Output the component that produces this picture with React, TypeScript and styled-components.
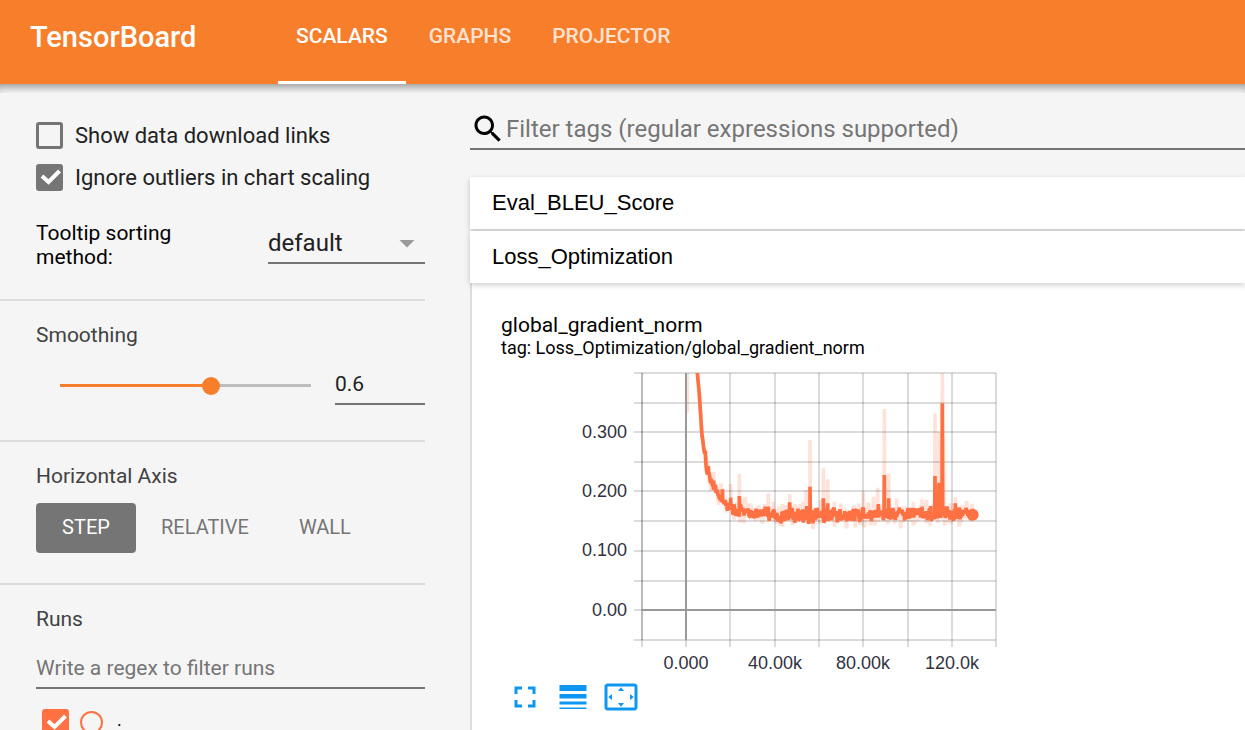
import React, { useState } from "react";
import styled, { createGlobalStyle } from "styled-components";

const GlobalStyle = createGlobalStyle`
  *, *::before, *::after { box-sizing: border-box; }
  body { margin: 0; background: #f5f5f5; color: #000; font-family: Roboto, "Liberation Sans", sans-serif; }
  button, input, select { font-family: inherit; }
`;

const Page = styled.div`
  display: flex;
  flex-direction: column;
  height: 100vh;
  overflow: hidden;
`;

const Header = styled.header`
  display: flex;
  flex: none;
  height: 84px;
  padding-left: 30px;
  background: #f77e2b;
  color: #fff;
`;

const Brand = styled.h1`
  width: 248px;
  margin: 0;
  font-size: 29px;
  line-height: 74px;
  font-weight: 500;
`;

const Tabs = styled.nav`
  display: flex;
  gap: 5px;
`;

const Tab = styled.button<{ $active?: boolean }>`
  padding: 0 18px 9px;
  border: 0;
  border-bottom: 3px solid ${(p) => (p.$active ? "#fff" : "transparent")};
  background: none;
  color: ${(p) => (p.$active ? "#fff" : "rgba(255, 255, 255, 0.8)")};
  font-size: 21px;
  font-weight: 500;
`;

const Body = styled.div`
  position: relative;
  display: flex;
  flex: 1;
  min-height: 0;
  overflow: hidden;

  &::before {
    content: "";
    position: absolute;
    inset: 0 0 auto;
    height: 9px;
    box-shadow: inset 0 8px 9px -5px rgba(0, 0, 0, 0.4);
  }
`;

const Sidebar = styled.aside`
  flex: none;
  width: 425px;
  margin-right: 45px;
`;

const Section = styled.section`
  padding: 22px 0 0 36px;
  border-bottom: 2px solid #dcdcdc;

  &:last-child { border-bottom: 0; }
`;

const OptionsSection = styled(Section)`
  padding-top: 38px;
  padding-bottom: 30px;
`;

const SmoothingSection = styled(Section)`
  padding-bottom: 35px;
`;

const AxisSection = styled(Section)`
  padding-bottom: 30px;
`;

const SectionTitle = styled.h2`
  margin: 0;
  color: #424242;
  font-size: 21px;
  line-height: 24px;
  font-weight: 400;
`;

const CheckLabel = styled.label`
  display: flex;
  align-items: center;
  gap: 12px;
  height: 27px;
  margin-bottom: 15px;
  color: #212121;
  font-size: 22px;
`;

const CheckFrame = styled.span`
  position: relative;
  flex: none;
  width: 27px;
  height: 27px;

  svg {
    position: absolute;
    inset: 0;
    pointer-events: none;
  }
`;

const CheckInput = styled.input<{ $color: string }>`
  appearance: none;
  display: block;
  width: 27px;
  height: 27px;
  margin: 0;
  border: 3px solid ${(p) => p.$color};
  border-radius: 3px;

  &:checked { background: ${(p) => p.$color}; }
`;

const SortRow = styled.div`
  display: flex;
  justify-content: space-between;
  padding-top: 15px;
`;

const SortLabel = styled.label`
  width: 170px;
  font-size: 21px;
  line-height: 24px;
`;

const SelectFrame = styled.span`
  position: relative;
  width: 157px;
  height: 43px;

  svg {
    position: absolute;
    top: 4px;
    right: 0;
    pointer-events: none;
  }
`;

const Select = styled.select`
  appearance: none;
  width: 100%;
  height: 43px;
  padding: 2px 0 0;
  border: 0;
  border-bottom: 2px solid #757575;
  background: none;
  color: #212121;
  font-size: 24px;
`;

const SliderRow = styled.div`
  display: flex;
  align-items: flex-end;
  gap: 15px;
  padding: 16px 0 0 15px;
`;

const Slider = styled.input<{ $ratio: number }>`
  appearance: none;
  flex: 1;
  min-width: 0;
  height: 18px;
  margin: 0 0 10px;
  background:
    linear-gradient(#f77e2b, #f77e2b) 9px 7px / calc((100% - 18px) * ${(p) => p.$ratio}) 3px no-repeat,
    linear-gradient(#bdbdbd, #bdbdbd) 9px 7px / calc(100% - 18px) 3px no-repeat;

  &::-webkit-slider-thumb {
    appearance: none;
    width: 18px;
    height: 18px;
    border: 0;
    border-radius: 50%;
    background: #f77e2b;
  }
`;

const ValueInput = styled.input`
  width: 90px;
  height: 42px;
  padding: 2px 0 0;
  border: 0;
  border-bottom: 2px solid #757575;
  background: none;
  color: #212121;
  font-size: 21px;
`;

const AxisButtons = styled.div`
  display: flex;
  margin-top: 15px;
`;

const AxisButton = styled.button<{ $active?: boolean }>`
  min-width: 100px;
  height: 50px;
  padding: 0 25px 2px;
  border: 0;
  border-radius: 4px;
  background: ${(p) => (p.$active ? "#757575" : "none")};
  color: ${(p) => (p.$active ? "#fff" : "#757575")};
  font-size: 20px;
`;

const RunsInput = styled.input`
  display: block;
  width: 100%;
  height: 42px;
  margin-top: 16px;
  padding: 2px 0 0;
  border: 0;
  border-bottom: 2px solid #757575;
  background: none;
  font-size: 21px;

  &::placeholder { color: #757575; }
`;

const RunRow = styled.div`
  display: flex;
  align-items: center;
  gap: 11px;
  padding: 20px 0 0 6px;
`;

const RunRadio = styled.input`
  appearance: none;
  width: 23px;
  height: 23px;
  margin: 0;
  border: 2px solid #ff7043;
  border-radius: 50%;
`;

const RunName = styled.label`
  padding: 0 0 6px 3px;
  font-size: 18px;
  line-height: 18px;
`;

const Main = styled.main`
  display: flex;
  flex: 1;
  flex-direction: column;
  min-width: 0;
`;

const SearchBar = styled.label`
  display: flex;
  align-items: center;
  flex: none;
  height: 40px;
  margin: 26px 0 27px;
  border-bottom: 2px solid #757575;
`;

const SearchInput = styled.input`
  flex: 1;
  min-width: 0;
  padding: 0;
  border: 0;
  background: none;
  font-size: 24px;

  &::placeholder { color: #757575; }
`;

const Category = styled.button`
  position: relative;
  flex: none;
  height: 52px;
  margin-bottom: 2px;
  padding: 0 22px;
  border: 0;
  background: #fff;
  box-shadow: 0 2px 6px rgba(0, 0, 0, 0.2);
  color: #000;
  font-family: "Liberation Sans", Arial, sans-serif;
  font-size: 22px;
  text-align: left;

  &:last-of-type { margin-bottom: 0; }
`;

const Pane = styled.section`
  flex: 1;
  padding: 30px 0 0 29px;
  border-left: 2px solid #dddddd;
  background: #fff;
`;

const ChartTitle = styled.h3`
  margin: 0;
  font-size: 21px;
  line-height: 24px;
  font-weight: 400;
`;

const ChartTag = styled.p`
  margin: 0;
  font-size: 18px;
  line-height: 22px;
`;

const ChartSvg = styled.svg`
  display: block;
  margin-top: 6px;
`;

const ChartTools = styled.div`
  display: flex;
`;

const ToolButton = styled.button`
  display: flex;
  padding: 4px 6px;
  border: 0;
  background: none;
  color: #0f96f0;
`;

type Point = [number, number];

const ICONS = {
  search:
    "M15.5 14h-.79l-.28-.27C15.41 12.59 16 11.11 16 9.5 16 5.91 13.09 3 9.5 3S3 5.91 3 9.5 5.91 16 9.5 16c1.61 0 3.09-.59 4.23-1.57l.27.28v.79l5 4.99L20.49 19l-4.99-5zm-6 0C7.01 14 5 11.99 5 9.5S7.01 5 9.5 5 14 7.01 14 9.5 11.99 14 9.5 14z",
  dropDown: "M7 10l5 5 5-5z",
  fullscreen: "M7 14H5v5h5v-2H7v-3zm-2-4h2V7h3V5H5v5zm12 7h-3v2h5v-5h-2v3zM14 5v2h3v3h2V5h-5z",
  lineWeight: "M3 17h18v-2H3v2zm0 3h18v-1H3v1zm0-7h18v-3H3v3zm0-9v4h18V4H3z",
  overscan:
    "M12.01 5.5L10 8h4l-1.99-2.5zM18 10v4l2.5-1.99L18 10zM6 10l-2.5 2.01L6 14v-4zm8 6h-4l2.01 2.5L14 16zm7-13H3c-1.1 0-2 .9-2 2v14c0 1.1.9 2 2 2h18c1.1 0 2-.9 2-2V5c0-1.1-.9-2-2-2zm0 16.01H3V4.99h18v14.02z",
};

function Icon({ name, color = "currentColor" }: { name: keyof typeof ICONS; color?: string }) {
  return (
    <svg width="36" height="36" viewBox="0 0 24 24" fill={color} aria-hidden="true">
      <path d={ICONS[name]} />
    </svg>
  );
}

function Check({ checked = false, color = "#757575", id }: { checked?: boolean; color?: string; id?: string }) {
  const [on, setOn] = useState(checked);
  return (
    <CheckFrame>
      <CheckInput id={id} type="checkbox" $color={color} checked={on} onChange={() => setOn(!on)} />
      {on && (
        <svg width="27" height="27" viewBox="0 0 27 27" aria-hidden="true">
          <path d="M6 12L12.5 18L23.5 7" fill="none" stroke="#fff" strokeWidth="4" />
        </svg>
      )}
    </CheckFrame>
  );
}

// Trend of the series, in chart units (three to a pixel), before noise.
const TREND: Point[] = [
  [228, 0], [233, 45], [238, 105], [245, 215], [252, 270], [262, 328], [275, 368], [290, 400], [305, 418],
  [320, 437], [345, 448], [380, 453], [400, 464], [640, 468], [730, 466], [860, 464], [960, 460], [1058, 463],
];

const SMOOTH_SPIKES: Point[] = [
  [265, 318], [281, 362], [307, 388], [332, 413], [358, 408], [445, 440], [509, 427], [560, 438], [570, 380],
  [587, 445], [610, 415], [623, 430], [660, 447], [730, 443], [775, 432], [793, 345], [806, 415], [906, 440],
  [932, 438], [945, 348], [957, 368], [967, 130], [1006, 430],
];

const RAW_SPIKES: Point[] = [
  [281, 335], [303, 370], [332, 372], [358, 342], [415, 436], [445, 400], [460, 425], [487, 432], [509, 402],
  [525, 432], [558, 390], [570, 240], [603, 420], [610, 325], [623, 358], [643, 425], [700, 438], [730, 395],
  [760, 410], [773, 383], [793, 147], [806, 340], [830, 415], [880, 425], [906, 418], [920, 420], [945, 160],
  [957, 215], [967, 0], [971, 230], [990, 430], [1006, 412], [1027, 435],
];

function trendAt(x: number): number {
  const i = Math.max(1, TREND.findIndex((p) => p[0] >= x));
  const [x0, y0] = TREND[i - 1];
  const [x1, y1] = TREND[i];
  return y0 + ((y1 - y0) * (x - x0)) / (x1 - x0);
}

function seriesPath(spikes: Point[], noise: number, seed: number): string {
  let state = seed;
  const random = () => {
    state = (state * 1103515245 + 12345) % 2147483648;
    return state / 2147483648;
  };
  const points: Point[] = [];
  for (let x = 228; x <= 1058; x += 2) {
    const quiet = x < 255 ? 0.2 : 1;
    points.push([x, trendAt(x) + (random() + random() - 1) * noise * quiet]);
  }
  spikes.forEach(([x, y]) => {
    points.push([x - 1, trendAt(x) + 6], [x, y], [x + 1, trendAt(x) + 6]);
  });
  points.sort((a, b) => a[0] - b[0]);
  return "M" + points.map(([x, y]) => `${x} ${y.toFixed(1)}`).join("L");
}

const SMOOTH_PATH = seriesPath(SMOOTH_SPIKES, 26, 7);
const RAW_PATH = seriesPath(RAW_SPIKES, 42, 21);

const GRID_X = [642, 686, 730, 775, 819, 863, 908, 952, 996];
const GRID_Y = [373, 403, 432, 462, 491, 521, 551, 581, 610, 640];
const X_LABELS: [number, string][] = [[686, "0.000"], [775, "40.00k"], [863, "80.00k"], [952, "120.0k"]];
const Y_LABELS: [number, string][] = [[432, "0.300"], [491, "0.200"], [550, "0.100"], [610, "0.00"]];

function GradientChart() {
  return (
    <ChartSvg width="510" height="310" viewBox="501 365 510 310" role="img" aria-label="global_gradient_norm">
      <svg x="642" y="373" width="354" height="267" viewBox="66 39 1062 801">
        <g fill="none" stroke="#ff7043">
          <path d="M203 39V158" strokeWidth="9" strokeOpacity="0.2" />
          <path d={RAW_PATH} strokeWidth="11" strokeOpacity="0.2" strokeLinejoin="bevel" />
        </g>
      </svg>
      <g stroke="#000" strokeOpacity="0.14" strokeWidth="2">
        {GRID_X.map((x) => <path key={x} d={`M${x} 373V647`} />)}
        {GRID_Y.map((y) => <path key={y} d={`M634 ${y}H996`} />)}
      </g>
      <path d="M642 373V640" stroke="#000" strokeOpacity="0.15" strokeWidth="2" />
      <path d="M686 373V640M642 610H996" stroke="#999" strokeWidth="2" />
      <svg x="642" y="373" width="354" height="267" viewBox="66 39 1062 801">
        <path d={SMOOTH_PATH} fill="none" stroke="#ff7043" strokeWidth="11" strokeLinejoin="bevel" />
        <circle cx="1058" cy="464" r="18" fill="#ff7043" />
      </svg>
      <g fill="#32313f" fontFamily='"Liberation Sans", Arial, sans-serif' fontSize="18">
        {Y_LABELS.map(([y, t]) => <text key={t} x="627" y={y + 6} textAnchor="end">{t}</text>)}
        {X_LABELS.map(([x, t]) => <text key={t} x={x} y="669" textAnchor="middle">{t}</text>)}
      </g>
    </ChartSvg>
  );
}

export default function App() {
  const [smoothing, setSmoothing] = useState("0.6");
  const [tab, setTab] = useState("SCALARS");
  const [axis, setAxis] = useState("STEP");

  return (
    <Page>
      <GlobalStyle />
      <Header>
        <Brand>TensorBoard</Brand>
        <Tabs>
          {["SCALARS", "GRAPHS", "PROJECTOR"].map((name) => (
            <Tab key={name} $active={name === tab} onClick={() => setTab(name)}>{name}</Tab>
          ))}
        </Tabs>
      </Header>
      <Body>
        <Sidebar>
          <OptionsSection>
            <CheckLabel><Check />Show data download links</CheckLabel>
            <CheckLabel><Check checked />Ignore outliers in chart scaling</CheckLabel>
            <SortRow>
              <SortLabel htmlFor="sorting">Tooltip sorting method:</SortLabel>
              <SelectFrame>
                <Select id="sorting" defaultValue="default">
                  <option>default</option>
                  <option>ascending</option>
                  <option>descending</option>
                  <option>nearest</option>
                </Select>
                <Icon name="dropDown" color="#9a9a9a" />
              </SelectFrame>
            </SortRow>
          </OptionsSection>
          <SmoothingSection>
            <SectionTitle id="smoothing">Smoothing</SectionTitle>
            <SliderRow>
              <Slider
                type="range" min="0" max="1" step="0.001" aria-labelledby="smoothing"
                $ratio={Number(smoothing) || 0} value={smoothing}
                onChange={(e) => setSmoothing(e.target.value)}
              />
              <ValueInput
                aria-labelledby="smoothing" value={smoothing}
                onChange={(e) => setSmoothing(e.target.value)}
              />
            </SliderRow>
          </SmoothingSection>
          <AxisSection>
            <SectionTitle>Horizontal Axis</SectionTitle>
            <AxisButtons>
              {["STEP", "RELATIVE", "WALL"].map((name) => (
                <AxisButton key={name} $active={name === axis} onClick={() => setAxis(name)}>{name}</AxisButton>
              ))}
            </AxisButtons>
          </AxisSection>
          <Section>
            <SectionTitle>Runs</SectionTitle>
            <RunsInput placeholder="Write a regex to filter runs" aria-label="Write a regex to filter runs" />
            <RunRow>
              <Check id="run" checked color="#ff7043" />
              <RunRadio type="radio" name="run" aria-label="." />
              <RunName htmlFor="run">.</RunName>
            </RunRow>
          </Section>
        </Sidebar>
        <Main>
          <SearchBar>
            <Icon name="search" />
            <SearchInput
              placeholder="Filter tags (regular expressions supported)"
              aria-label="Filter tags (regular expressions supported)"
            />
          </SearchBar>
          <Category>Eval_BLEU_Score</Category>
          <Category>Loss_Optimization</Category>
          <Pane>
            <ChartTitle>global_gradient_norm</ChartTitle>
            <ChartTag>tag: Loss_Optimization/global_gradient_norm</ChartTag>
            <GradientChart />
            <ChartTools>
              <ToolButton aria-label="Toggle full size"><Icon name="fullscreen" /></ToolButton>
              <ToolButton aria-label="Toggle logarithmic scale"><Icon name="lineWeight" /></ToolButton>
              <ToolButton aria-label="Fit domain to data"><Icon name="overscan" /></ToolButton>
            </ChartTools>
          </Pane>
        </Main>
      </Body>
    </Page>
  );
}
